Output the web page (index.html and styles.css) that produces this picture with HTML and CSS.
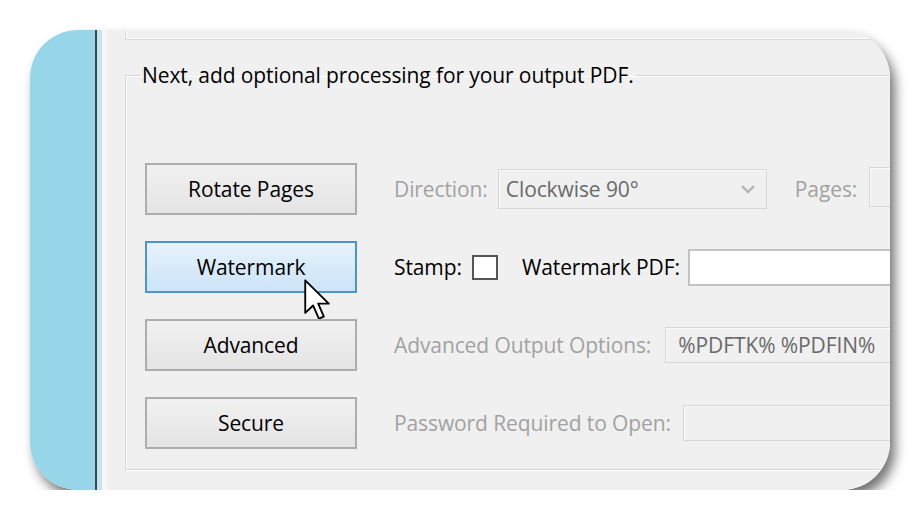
FILE: index.html
```html
<!DOCTYPE html>
<html lang="en">
<head>
  <meta charset="UTF-8" />
  <title>PDF Processing Options</title>
  <link rel="stylesheet" href="styles.css">
</head>
<body>
  <div class="frame">
    <div class="desktop"></div>
    <div class="window">
      <div class="prev-group"></div>
      <fieldset class="group">
        <legend>Next, add optional processing for your output PDF.</legend>
        <div class="rows">
          <div class="row">
            <button class="btn">Rotate Pages</button>
            <span class="lbl off">Direction:</span>
            <div class="combo">
              <span>Clockwise 90°</span>
              <svg class="chev" width="16" height="10" viewBox="0 0 16 10"><path d="M2 2 L8 8 L14 2" fill="none" stroke="#b5b5b5" stroke-width="2.4"/></svg>
            </div>
            <span class="lbl off pages">Pages:</span>
            <div class="box box-pages"></div>
          </div>
          <div class="row">
            <button class="btn hover">Watermark
              <svg class="cursor" width="26" height="41" viewBox="0 0 12.6 19.8"><path d="M0.6 0.6 V16.4 L4.4 12.8 L7.2 19.2 L9.6 18.2 L6.9 11.9 H12 Z" fill="#fff" stroke="#000" stroke-width="0.9" stroke-linejoin="round"/></svg>
            </button>
            <span class="lbl">Stamp:</span>
            <span class="check"></span>
            <span class="lbl wm">Watermark PDF:</span>
            <div class="field field-wm"></div>
          </div>
          <div class="row">
            <button class="btn">Advanced</button>
            <span class="lbl off">Advanced Output Options:</span>
            <div class="box box-adv"><span>%PDFTK% %PDFIN%</span></div>
          </div>
          <div class="row">
            <button class="btn">Secure</button>
            <span class="lbl off">Password Required to Open:</span>
            <div class="box box-pw"></div>
          </div>
        </div>
      </fieldset>
    </div>
  </div>
</body>
</html>
```

FILE: styles.css
```css
body {
  margin: 0;
  background: #ffffff;
  font-family: "Open Sans", "Noto Sans", sans-serif;
  font-size: 21px;
  letter-spacing: -0.1px;
  color: #000;
}
.frame {
  margin: 30px 0 0 30px;
  width: 860px;
  height: 460px;
  border-radius: 48px;
  overflow: hidden;
  display: flex;
  box-shadow: 5px 8px 12px rgba(0,0,0,0.55);
}
.desktop {
  width: 65px;
  background: #97d5e8;
  flex-shrink: 0;
}
.window {
  flex: 1;
  border-left: 2px solid #3b484f;
  background: linear-gradient(to right, #c5e4ee 0, #c5e4ee 5px, #f7f7f7 5px, #f7f7f7 10px, #f0f0f0 10px);
  padding-left: 28px;
  overflow: hidden;
}
.prev-group {
  height: 9px;
  border-left: 1px solid #d8d8d8;
  border-bottom: 1px solid #d8d8d8;
  box-shadow: inset 1px -1px 0 #fff;
}
.group {
  margin: 23px 0 0 0;
  padding: 0 0 20px 19px;
  width: 820px;
  min-width: 0;
  border: 1px solid #d8d8d8;
  box-shadow: inset 1px 1px 0 #fff, 1px 1px 0 #fff;
}
.group legend {
  margin-left: -5px;
  padding: 0 2px;
  line-height: 24px;
}
.rows {
  padding-top: 76px;
  display: flex;
  flex-direction: column;
  gap: 26px;
}
.row {
  display: flex;
  align-items: center;
  height: 52px;
  white-space: nowrap;
}
.row > * {
  flex-shrink: 0;
}
.btn {
  position: relative;
  width: 212px;
  height: 52px;
  margin-right: 37px;
  font: inherit;
  letter-spacing: inherit;
  color: #000;
  border: 2px solid #adadad;
  background: linear-gradient(#f1f1f1, #e4e4e4);
  padding: 0;
}
.btn.hover {
  border-color: #4a94d4;
  background: linear-gradient(#e6f2fc, #cce4f8);
}
.cursor {
  position: absolute;
  left: 157px;
  top: 36px;
}
.lbl.off {
  color: #a2a2a2;
}
.combo {
  margin-left: 10px;
  width: 269px;
  height: 40px;
  box-sizing: border-box;
  border: 1px solid #d6d6d6;
  box-shadow: inset 1px 1px 0 #fafafa;
  display: flex;
  align-items: center;
  justify-content: space-between;
  padding: 0 10px 0 7px;
  color: #6a6a6a;
}
.pages {
  margin-left: 28px;
}
.box {
  height: 36px;
  box-sizing: border-box;
  border: 1px solid #d6d6d6;
  box-shadow: inset 1px 1px 0 #fbfbfb;
  color: #6a6a6a;
  display: flex;
  align-items: center;
  padding-left: 12px;
  overflow: hidden;
}
.box-pages {
  margin-left: 12px;
  width: 120px;
  height: 40px;
  margin-top: -4px;
}
.check {
  margin-left: 10px;
  width: 26px;
  height: 25px;
  box-sizing: border-box;
  border: 2px solid #555;
  background: #fff;
}
.wm {
  margin-left: 24px;
}
.field-wm {
  margin-left: 8px;
  width: 300px;
  height: 37px;
  box-sizing: border-box;
  border: 2px solid #c2c2c2;
  background: #fff;
}
.box-adv {
  margin-left: 14px;
  width: 300px;
}
.box-pw {
  margin-left: 12px;
  width: 300px;
}
```
